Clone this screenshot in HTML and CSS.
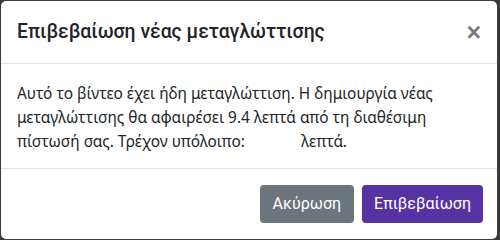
FILE: index.html
```html
<!DOCTYPE html>
<html lang="el">
<head>
  <meta charset="UTF-8" />
  <meta name="viewport" content="width=device-width, initial-scale=1.0"/>
  <title>Επιβεβαίωση</title>
  <link rel="stylesheet" href="styles.css">
</head>
<body>
  <div class="modal-content">
    <div class="modal-header">
      <h5 class="modal-title">Επιβεβαίωση νέας μεταγλώττισης</h5>
      <button class="close" type="button">&times;</button>
    </div>
    <div class="modal-body">
      Αυτό το βίντεο έχει ήδη μεταγλώττιση. Η δημιουργία νέας
      μεταγλώττισης θα αφαιρέσει 9.4 λεπτά από τη διαθέσιμη
      πίστωσή σας. Τρέχον υπόλοιπο: &nbsp;&nbsp;&nbsp;&nbsp;&nbsp;&nbsp;&nbsp;&nbsp;&nbsp;&nbsp;&nbsp;&nbsp;&nbsp;λεπτά.
    </div>
    <div class="modal-footer">
      <button class="btn btn-secondary" type="button">Ακύρωση</button>
      <button class="btn btn-primary" type="button">Επιβεβαίωση</button>
    </div>
  </div>
</body>
</html>
```

FILE: styles.css
```css
body {
  margin: 0;
  padding: 1px 3px 0 1px;
  background-color: #3a3a3a;
  font-family: 'Noto Sans', sans-serif;
  color: #212529;
}

.modal-content {
  background-color: white;
  border-radius: 5px;
  height: 238px;
  display: flex;
  flex-direction: column;
}

.modal-header {
  display: flex;
  align-items: center;
  justify-content: space-between;
  padding: 16px;
  border-bottom: 1px solid #dee2e6;
}

.modal-title {
  margin: 0;
  font-family: 'Roboto', sans-serif;
  font-size: 19.4px;
  font-weight: 500;
  line-height: 30px;
}

.close {
  background: none;
  border: none;
  padding: 0;
  font-family: 'Liberation Sans', Arial, sans-serif;
  font-size: 25px;
  font-weight: bold;
  line-height: 30px;
  color: #7a7a7a;
  cursor: pointer;
}

.modal-body {
  padding: 18px 16px 14px;
  font-size: 15.4px;
  line-height: 24px;
}

.modal-footer {
  display: flex;
  justify-content: flex-end;
  padding: 12px 10px 12px 12px;
  border-top: 1px solid #dee2e6;
}

.btn {
  margin: 4px;
  padding: 6px 12px;
  border: none;
  border-radius: 4px;
  font-family: 'Roboto', sans-serif;
  font-size: 16px;
  line-height: 26px;
  color: white;
  cursor: pointer;
}

.btn-secondary {
  background-color: #6c757d;
  padding: 6px 13px;
}

.btn-primary {
  background-color: #5533a3;
}
```
